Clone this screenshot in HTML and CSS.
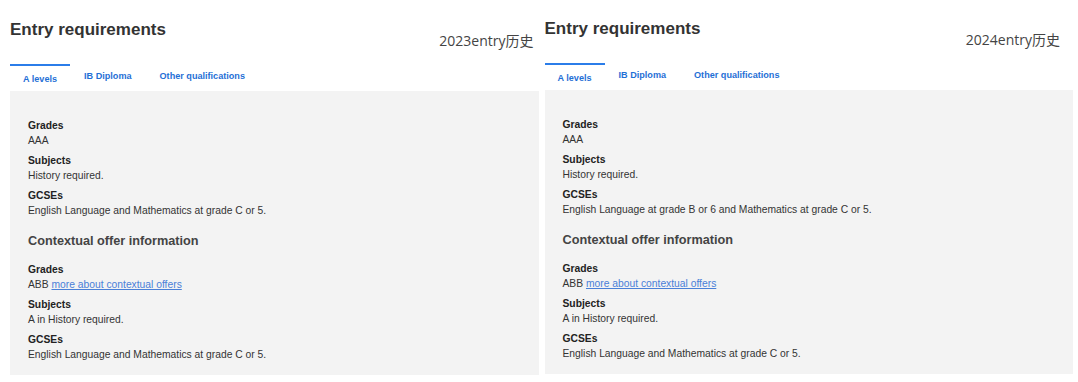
FILE: index.html
```html
<!DOCTYPE html>
<html lang="en">
<head>
  <meta charset="UTF-8">
  <meta name="viewport" content="width=device-width, initial-scale=1.0">
  <title>Entry requirements</title>
  <link rel="stylesheet" href="styles.css">
</head>
<body>
  <div class="compare">
    <!-- 2023 -->
    <section class="req req--first">
      <div class="req-head">
        <h2 class="req-title">Entry requirements</h2>
        <span class="req-note">2023entry历史</span>
      </div>
      <ul class="tabs">
        <li class="tab active">A levels</li>
        <li class="tab">IB Diploma</li>
        <li class="tab">Other qualifications</li>
      </ul>
      <div class="panel">
        <dl class="req-list">
          <dt>Grades</dt>
          <dd>AAA</dd>
          <dt>Subjects</dt>
          <dd>History required.</dd>
          <dt>GCSEs</dt>
          <dd>English Language and Mathematics at grade C or 5.</dd>
        </dl>
        <h3 class="panel-sub">Contextual offer information</h3>
        <dl class="req-list">
          <dt>Grades</dt>
          <dd>ABB <a href="#">more about contextual offers</a></dd>
          <dt>Subjects</dt>
          <dd>A in History required.</dd>
          <dt>GCSEs</dt>
          <dd>English Language and Mathematics at grade C or 5.</dd>
        </dl>
      </div>
    </section>

    <!-- 2024 -->
    <section class="req req--second">
      <div class="req-head">
        <h2 class="req-title">Entry requirements</h2>
        <span class="req-note">2024entry历史</span>
      </div>
      <ul class="tabs">
        <li class="tab active">A levels</li>
        <li class="tab">IB Diploma</li>
        <li class="tab">Other qualifications</li>
      </ul>
      <div class="panel">
        <dl class="req-list">
          <dt>Grades</dt>
          <dd>AAA</dd>
          <dt>Subjects</dt>
          <dd>History required.</dd>
          <dt>GCSEs</dt>
          <dd>English Language at grade B or 6 and Mathematics at grade C or 5.</dd>
        </dl>
        <h3 class="panel-sub">Contextual offer information</h3>
        <dl class="req-list">
          <dt>Grades</dt>
          <dd>ABB <a href="#">more about contextual offers</a></dd>
          <dt>Subjects</dt>
          <dd>A in History required.</dd>
          <dt>GCSEs</dt>
          <dd>English Language and Mathematics at grade C or 5.</dd>
        </dl>
      </div>
    </section>
  </div>
</body>
</html>
```

FILE: styles.css
```css
:root {
  --blue: #1f6fd6;
  --blue-line: #2b7de9;
  --link: #4a80d8;
  --panel-bg: #f3f3f3;
  --text-dark: #222;
  --text-medium: #333;
}

* {
  margin: 0;
  padding: 0;
  box-sizing: border-box;
}

body {
  background: #fff;
  font-family: 'Liberation Sans', Arial, sans-serif;
  color: var(--text-medium);
}

/* Dos columnas */
.compare {
  display: flex;
  gap: 6px;
  padding: 0 5px 0 10px;
}

.req {
  flex: 1;
  min-width: 0;
}

.req--first {
  padding-top: 1px;
}

/* Cabecera */
.req-head {
  display: flex;
  justify-content: space-between;
  align-items: flex-start;
  height: 63px;
}

.req-title {
  padding-top: 19px;
  font-size: 17px;
  line-height: 20px;
  font-weight: 700;
  color: #333;
}

.req-note {
  padding-top: 30px;
  margin-right: 5px;
  font-family: 'Open Sans', 'Noto Sans CJK SC', sans-serif;
  font-size: 14px;
  line-height: 20px;
  color: #444;
}

.req--second .req-note {
  margin-right: 13px;
}

/* Pestañas */
.tabs {
  display: flex;
  list-style: none;
  height: 27px;
}

.tab {
  padding: 3px 14px 0;
  font-size: 9.1px;
  font-weight: 700;
  line-height: 14px;
  color: var(--blue);
  border-top: 2px solid transparent;
}

.tab.active {
  padding: 6px 13px 0;
  border-top-color: var(--blue-line);
  background: #fff;
}

/* Panel gris */
.panel {
  background: var(--panel-bg);
  padding: 26.5px 18px 8px;
}

.req-list dt {
  font-size: 10.3px;
  line-height: 15px;
  font-weight: 700;
  color: var(--text-dark);
}

.req-list dd {
  font-size: 10.3px;
  line-height: 16px;
  margin-bottom: 4px;
  color: var(--text-medium);
}

.req-list a {
  color: var(--link);
  text-decoration: underline;
}

.panel-sub {
  margin: 13px 0 12px;
  font-size: 12.7px;
  line-height: 18px;
  font-weight: 700;
  color: #444;
}
```
